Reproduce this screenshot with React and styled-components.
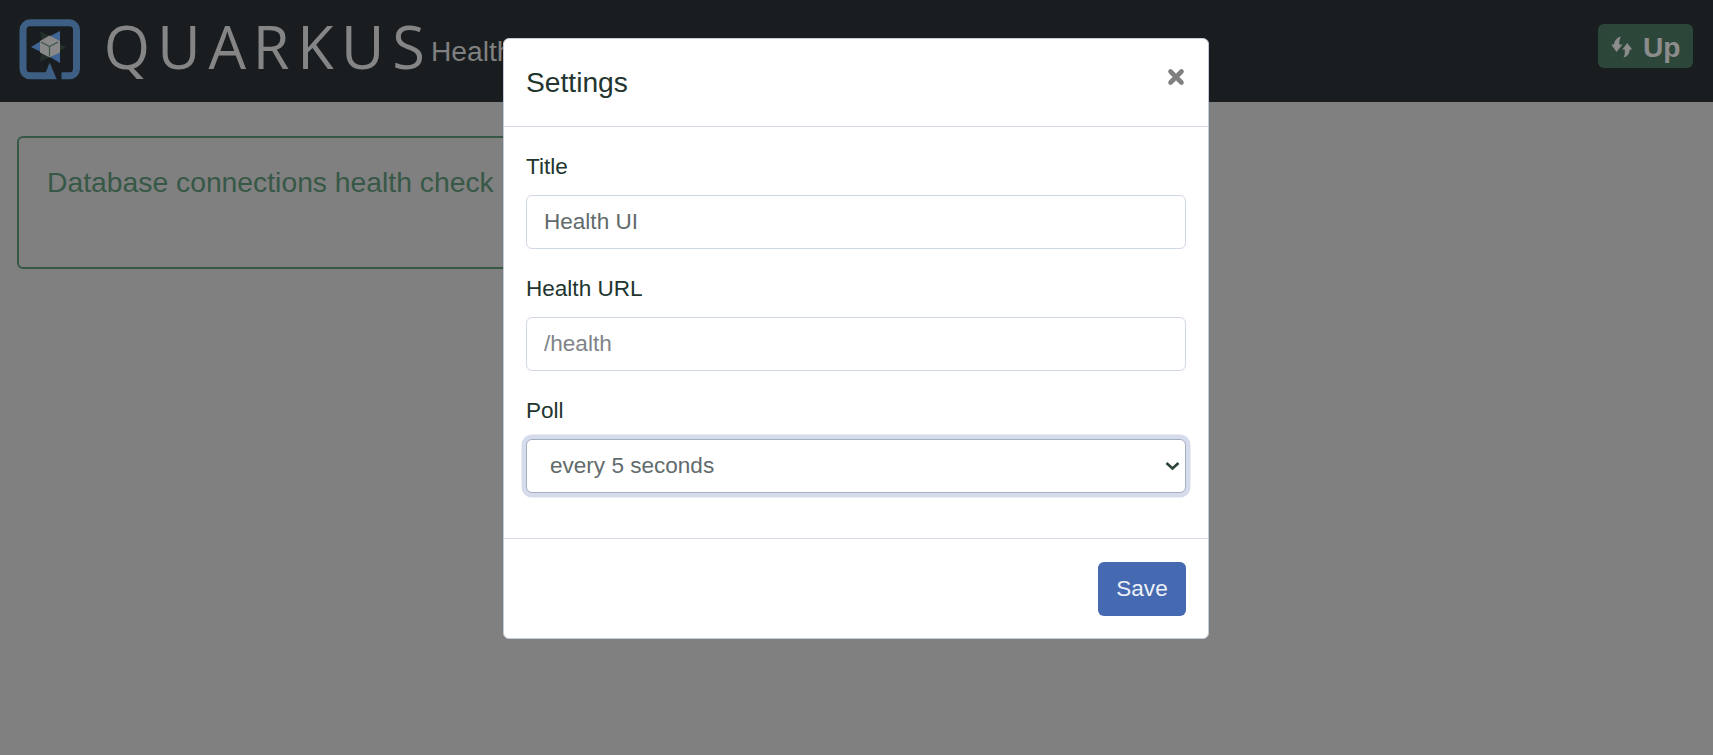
import React from "react";
import styled, { createGlobalStyle, css } from "styled-components";

const Global = createGlobalStyle`
  * { box-sizing: border-box; }
  html, body, #root { height: 100%; }
  body {
    margin: 0;
    overflow: hidden;
    background: #808080;
    color: #22352f;
    font: 22.56px/1.5 "Liberation Sans", Arial, sans-serif;
  }
`;

const Navbar = styled.nav`
  display: flex;
  align-items: center;
  height: 102px;
  padding: 0 20px 0 18px;
  background: #191d1f;
`;

const Logo = styled.svg`
  display: block;
  flex: none;
`;

const NavTitle = styled.span`
  color: #808080;
  font-size: 28.2px;
  line-height: 42px;
  margin: -1px 0 0 -2px;
  white-space: nowrap;
`;

const Badge = styled.span`
  display: flex;
  align-items: center;
  gap: 10px;
  width: 95px;
  height: 44px;
  margin: -11px 0 0 auto;
  padding: 3px 0 0 13px;
  border-radius: 6px;
  background: #2c473a;
  color: #8c8c8c;
  font-size: 28.2px;
  font-weight: 700;
  line-height: 1;
`;

const HealthCard = styled.section`
  width: 640px;
  height: 133px;
  margin: 34px 0 0 17px;
  padding: 25px 28px;
  border: 2px solid #375846;
  border-radius: 6px;
  color: #375846;
  font-size: 28.3px;
  line-height: 38px;
`;

const Overlay = styled.div`
  position: fixed;
  inset: 0;
  display: flex;
  justify-content: center;
  align-items: flex-start;
  padding: 38px 1px 0 0;
`;

const Dialog = styled.div`
  width: 706px;
  height: 601px;
  display: flex;
  flex-direction: column;
  background: #fff;
  border: 1px solid #c3cad8;
  border-radius: 6px;
`;

const DialogHeader = styled.header`
  display: flex;
  justify-content: space-between;
  height: 88px;
  padding: 22px 22px 0;
  border-bottom: 1px solid #d5dbea;
`;

const DialogTitle = styled.h5`
  margin: 0;
  font-size: 28.2px;
  font-weight: 400;
  line-height: 42px;
`;

const CloseButton = styled.button`
  width: 20px;
  height: 32px;
  padding: 0;
  border: 0;
  background: none;
  svg { display: block; }
`;

const DialogBody = styled.div`
  flex: 1;
  padding: 22px 22px 0;
`;

const Group = styled.div`
  height: 122px;
`;

const Label = styled.label`
  display: block;
  height: 36px;
  margin-bottom: 10px;
  line-height: 36px;
`;

const control = css`
  width: 100%;
  height: 54px;
  border: 1.5px solid #d0d7e7;
  border-radius: 6px;
  background: #fff;
  color: #626b6c;
  font: inherit;
`;

const Input = styled.input`
  ${control}
  display: block;
  padding: 0 17px 1px;
  &::placeholder { color: #808389; opacity: 1; }
`;

const Select = styled.div`
  ${control}
  display: flex;
  align-items: center;
  justify-content: space-between;
  padding: 0 5px 1px 23px;
  border-color: #a4afc5;
  box-shadow: 0 0 0 4.5px #d5dbea;
`;

const DialogFooter = styled.footer`
  display: flex;
  justify-content: flex-end;
  height: 100px;
  padding: 23px 22px 0;
  border-top: 1px solid #d5dbea;
`;

const SaveButton = styled.button`
  width: 88px;
  height: 54px;
  padding: 0;
  border: 0;
  border-radius: 6px;
  background: #456ab2;
  color: #eef1f7;
  font: inherit;
`;

const QuarkusLogo = () => (
  <Logo width="415" height="96" viewBox="18 3 415 96">
    <path
      d="M61.5 75.800H69.500a7 7 0 0 0 7-7V29.800a7 7 0 0 0-7-7H30a7 7 0 0 0-7 7V68.800a7 7 0 0 0 7 7H46"
      fill="none"
      stroke="#3d5f83"
      strokeWidth="7"
    />
    <path d="M43 79.300L49.700 62.500 56.700 79.300Z" fill="#3d5f83" />
    <path d="M50 36l10-5v11zM31 47l10-6v11zM50 57l10-5v11z" fill="#3f6495" />
    <path d="M40 31l9 5-7 6zM40 62l1-8 8 3zM60 44l6 3-6 4z" fill="#223029" />
    <path d="M49.500 35.500L60 41V52.500L49.500 57.500 40 52.500V41Z" fill="#898989" />
    <path d="M41 42l8.500 4.500 8.500-4.500M49.500 46.500v10" fill="none" stroke="#3c5547" strokeWidth="1.200" />
    <text
      y="69"
      x="103.7 157.200 208.600 252.700 297.200 341 392.200"
      fill="#858585"
      fontFamily="Open Sans, sans-serif"
      fontWeight="400"
      fontSize="59.5"
    >
      QUARKUS
    </text>
  </Logo>
);

const StatusArrows = () => (
  <svg width="22" height="22" viewBox="0 0 22 22">
    <path
      d="M9.800.5C9 3 8 4.500 8.200 8.500H11.500L5.500 16 .3 8.500H3C3.500 4.500 6 1.500 9.800.5ZM16.200 7L21.200 13.500H18.800C18.500 17.500 16.500 20.500 12.500 21.500C14 19 14 17 13.700 13.500H11.300Z"
      fill="#8c8c8c"
    />
  </svg>
);

export default function App() {
  return (
    <>
      <Global />
      <Navbar>
        <QuarkusLogo />
        <NavTitle>Health UI</NavTitle>
        <Badge>
          <StatusArrows />
          Up
        </Badge>
      </Navbar>
      <HealthCard>Database connections health check</HealthCard>
      <Overlay>
        <Dialog role="dialog" aria-label="Settings">
          <DialogHeader>
            <DialogTitle>Settings</DialogTitle>
            <CloseButton aria-label="Close">
              <svg width="20" height="32" viewBox="0 0 20 32">
                <path
                  d="M4.500 10.500L15.500 21.500M15.500 10.500L4.500 21.500"
                  stroke="#808080"
                  strokeWidth="4.600"
                  strokeLinecap="round"
                />
              </svg>
            </CloseButton>
          </DialogHeader>
          <DialogBody>
            <Group>
              <Label htmlFor="title">Title</Label>
              <Input id="title" defaultValue="Health UI" />
            </Group>
            <Group>
              <Label htmlFor="url">Health URL</Label>
              <Input id="url" placeholder="/health" />
            </Group>
            <Group>
              <Label>Poll</Label>
              <Select role="listbox">
                every 5 seconds
                <svg width="15" height="10" viewBox="0 0 15 10">
                  <path d="M1.500 2L7.500 7.500 13.500 2" fill="none" stroke="#2b4438" strokeWidth="2.600" />
                </svg>
              </Select>
            </Group>
          </DialogBody>
          <DialogFooter>
            <SaveButton>Save</SaveButton>
          </DialogFooter>
        </Dialog>
      </Overlay>
    </>
  );
}
